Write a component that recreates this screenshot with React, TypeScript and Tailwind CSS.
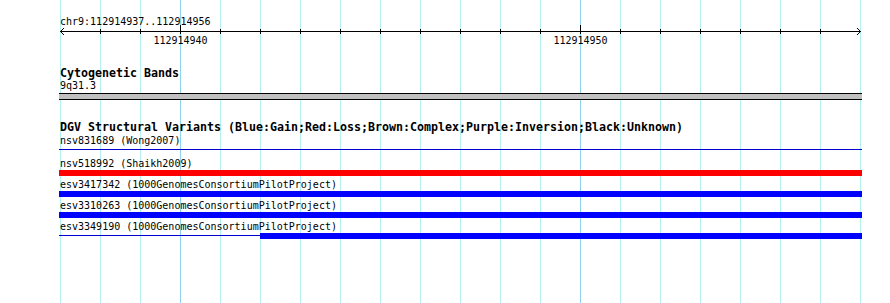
import React from "react";

type Row = { label: string; kind: "line" | "full" | "partial"; color: string };

const rows: Row[] = [
  { label: "nsv831689 (Wong2007)", kind: "line", color: "#0000cc" },
  { label: "nsv518992 (Shaikh2009)", kind: "full", color: "#ff0000" },
  { label: "esv3417342 (1000GenomesConsortiumPilotProject)", kind: "full", color: "#0000ff" },
  { label: "esv3310263 (1000GenomesConsortiumPilotProject)", kind: "full", color: "#0000ff" },
  { label: "esv3349190 (1000GenomesConsortiumPilotProject)", kind: "partial", color: "#0000ff" },
];

function Bar({ row }: { row: Row }) {
  if (row.kind === "line") {
    return (
      <div className="h-[6px] w-[803px]">
        <div className="h-[1px] mt-[2px] bg-[#0000cc]" />
      </div>
    );
  }
  if (row.kind === "full") {
    return <div className="h-[6px] w-[803px]" style={{ backgroundColor: row.color }} />;
  }
  return (
    <div className="h-[6px] w-[803px] flex">
      <div className="w-[201px]">
        <div className="h-[1px] mt-[2px] bg-[#0000cc]" />
      </div>
      <div className="flex-1 bg-[#0000ff]" />
    </div>
  );
}

export default function App() {
  const grid = Array.from({ length: 21 }, (_, i) => 60 + i * 40);
  const ticks = grid.slice(1, -1);
  return (
    <div className="relative w-[890px] h-[303px] bg-white overflow-hidden font-['DejaVu_Sans_Mono',monospace] text-black">
      <svg className="absolute left-0 top-0" width={890} height={303}>
        {grid.map((x) => (
          <rect
            key={x}
            x={x}
            y={0}
            width={1}
            height={303}
            fill={x === 180 || x === 580 ? "#8ed4ec" : "#b4f0f2"}
          />
        ))}
      </svg>
      <div className="relative flex flex-col pl-[59px] w-[862px]">
        <div className="pt-[16px] text-[10px] leading-[12px] pl-[1px]">chr9:112914937..112914956</div>
        <svg width={803} height={22} className="block overflow-visible">
          <rect x={1} y={3} width={801} height={1} fill="#000" shapeRendering="crispEdges" />
          {ticks.map((gx) => {
            const major = gx === 180 || gx === 580;
            return (
              <rect
                key={gx}
                x={gx - 59}
                y={major ? -3 : 1}
                width={1}
                height={major ? 9 : 5}
                fill="#000"
                shapeRendering="crispEdges"
              />
            );
          })}
          <polyline points="5,0 1.5,3.5 5,7" fill="none" stroke="#000" strokeWidth={1} />
          <polyline points="798,0 801.5,3.5 798,7" fill="none" stroke="#000" strokeWidth={1} />
          <text x={121.5} y={16} textAnchor="middle" fontSize={10} fontFamily="DejaVu Sans Mono, monospace" fill="#000">
            112914940
          </text>
          <text x={521.5} y={16} textAnchor="middle" fontSize={10} fontFamily="DejaVu Sans Mono, monospace" fill="#000">
            112914950
          </text>
        </svg>
        <div className="mt-[16px] text-[11.63px] font-bold leading-[14px] pl-[1px]">Cytogenetic Bands</div>
        <div className="text-[10px] leading-[12px] pl-[1px]">9q31.3</div>
        <div className="mt-[1px] h-[7px] w-[803px] border-y border-black bg-[#c0c0c0]" />
        <div className="mt-[21px] text-[11.63px] font-bold leading-[13px] pl-[1px] whitespace-nowrap">
          DGV Structural Variants (Blue:Gain;Red:Loss;Brown:Complex;Purple:Inversion;Black:Unknown)
        </div>
        {rows.map((r) => (
          <div key={r.label} className="mb-[2px]">
            <div className="text-[10px] leading-[13px] pl-[1px] whitespace-nowrap">{r.label}</div>
            <Bar row={r} />
          </div>
        ))}
      </div>
    </div>
  );
}
